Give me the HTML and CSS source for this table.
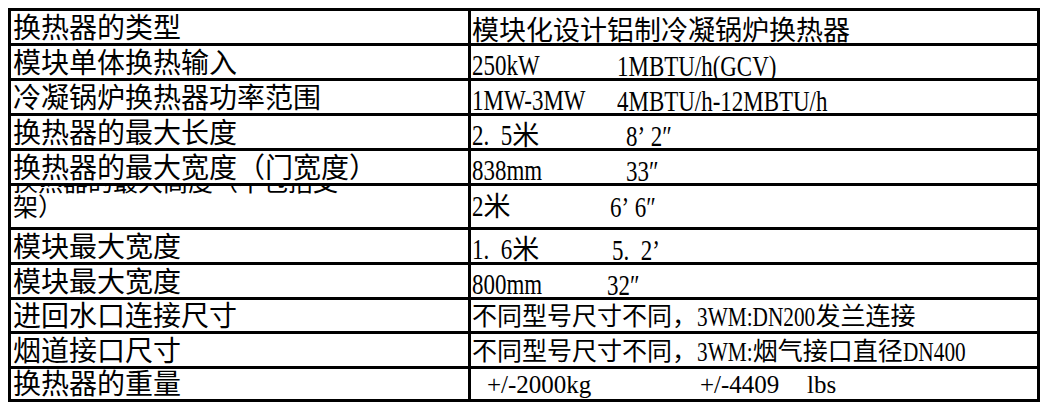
FILE: index.html
```html
<!DOCTYPE html>
<html lang="zh-CN">
<head>
<meta charset="utf-8">
<title>换热器参数</title>
<link rel="stylesheet" href="styles.css">
</head>
<body>
<div class="sheet">
  <div class="cell k">换热器的类型</div>
  <div class="cell v cn27">模块化设计铝制冷凝锅炉换热器</div>

  <div class="cell k">模块单体换热输入</div>
  <div class="cell v"><span class="a"><span class="lat">250kW</span></span><span class="lat">1MBTU/h(GCV)</span></div>

  <div class="cell k">冷凝锅炉换热器功率范围</div>
  <div class="cell v"><span class="a"><span class="lat">1MW-3MW</span></span><span class="lat">4MBTU/h-12MBTU/h</span></div>

  <div class="cell k">换热器的最大长度</div>
  <div class="cell v"><span class="a w154"><span class="lat dec">2.&nbsp;&nbsp;5</span>米</span><span class="lat">8’&nbsp;2″</span></div>

  <div class="cell k">换热器的最大宽度（门宽度）</div>
  <div class="cell v"><span class="a w154"><span class="lat">838mm</span></span><span class="lat">33″</span></div>

  <div class="cell k tall"><div class="wrap">换热器的最大高度（不包括支<br>架）</div></div>
  <div class="cell v tallv"><span class="a w138"><span class="lat one">2</span>米</span><span class="lat">6’&nbsp;6″</span></div>

  <div class="cell k">模块最大宽度</div>
  <div class="cell v"><span class="a w140"><span class="lat dec">1.&nbsp;&nbsp;6</span>米</span><span class="lat">5.&nbsp;&nbsp;2’</span></div>

  <div class="cell k">模块最大宽度</div>
  <div class="cell v"><span class="a w135"><span class="lat">800mm</span></span><span class="lat">32″</span></div>

  <div class="cell k">进回水口连接尺寸</div>
  <div class="cell v cn25">不同型号尺寸不同，<span class="lat m1">3WM:DN200</span>发兰连接</div>

  <div class="cell k">烟道接口尺寸</div>
  <div class="cell v cn25">不同型号尺寸不同，<span class="lat m2">3WM:</span>烟气接口直径<span class="lat">DN400</span></div>

  <div class="cell k">换热器的重量</div>
  <div class="cell v wt"><span class="a w213">+/-2000kg</span><span class="a w107">+/-4409</span><span>lbs</span></div>
</div>
</body>
</html>
```

FILE: styles.css
```css
html, body {
  background: #ffffff;
}
body {
  margin: 8px;
  font-family: "Liberation Serif", "Noto Sans CJK SC", serif;
  color: #000;
}
.sheet {
  display: grid;
  grid-template-columns: 457px 566px;
  grid-template-rows: repeat(5, 32px) 41px 32px 32px 31px 32px 30px;
  gap: 3px;
  padding: 3px;
  background: #000;
  width: fit-content;
}
.cell {
  background: #fff;
  overflow: hidden;
  display: flex;
  align-items: flex-end;
  white-space: nowrap;
}
.k {
  font-family: "Noto Sans CJK SC", sans-serif;
  font-size: 28px;
  line-height: 28px;
  padding: 0 0 3px 2px;
}
.v {
  font-size: 27px;
  line-height: 24px;
  padding: 0 0 0 1px;
}
.cn27 {
  padding-bottom: 0;
}
.cn25 {
  font-size: 25px;
  padding-bottom: 2px;
}
.lat {
  display: inline-block;
  font-size: 30px;
  transform: scaleX(0.765);
  transform-origin: 0 50%;
}
.dec { margin-right: -12.3px; }
.one { margin-right: -3.5px; }
.cn25 .lat {
  font-size: 28px;
  transform: scaleX(0.76);
}
.m1 { margin-right: -37px; }
.m2 { margin-right: -17.5px; }
.a {
  display: inline-block;
  width: 145px;
}
.w154 { width: 154px; }
.w138 { width: 138px; }
.w140 { width: 140px; }
.w135 { width: 135px; }
.w213 { width: 213px; }
.w107 { width: 107px; }
.wt {
  font-size: 25px;
  padding-left: 16px;
  padding-bottom: 2px;
}
.tall {
  font-size: 25px;
  padding-bottom: 9px;
}
.wrap {
  line-height: 25px;
}
.tallv {
  padding-bottom: 8px;
}
```
